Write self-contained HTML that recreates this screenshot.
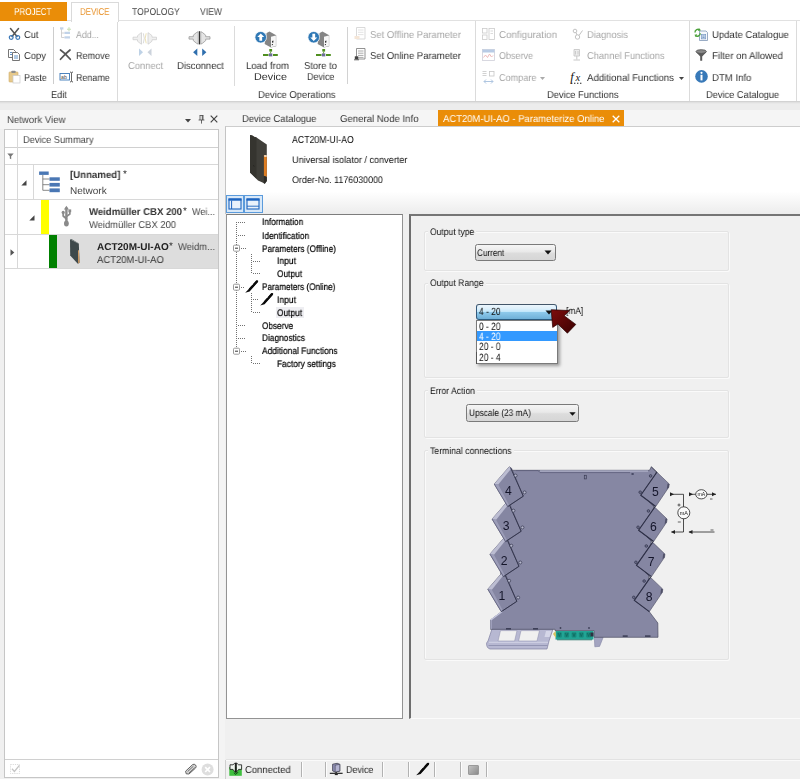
<!DOCTYPE html>
<html>
<head>
<meta charset="utf-8">
<style>
html,body{margin:0;padding:0;}
body{width:800px;height:779px;position:relative;overflow:hidden;background:#f0f0f0;font-family:"Liberation Sans",sans-serif;font-size:10.5px;color:#333;}
.a{position:absolute;box-sizing:border-box;}
.t{position:absolute;white-space:nowrap;transform-origin:0 50%;text-rendering:geometricPrecision;will-change:transform;}
.sep{position:absolute;width:1px;background:#dbdbdb;}
svg{position:absolute;overflow:visible;}
.gb{position:absolute;box-sizing:border-box;border:1px solid #e3e3e3;box-shadow:inset 1px 1px 0 #fafafa,1px 1px 0 #fafafa;border-radius:2px;}
.ssep{position:absolute;top:762px;width:1px;height:15px;background:#b2b2b2;box-shadow:1px 0 0 #fdfdfd;}

</style>
</head>
<body>
<!-- RIBBON BG -->
<div class="a" style="left:0;top:0;width:800px;height:102px;background:#fff;border-bottom:1px solid #d2d2d2;"></div>
<div class="a" style="left:0;top:102px;width:800px;height:8px;background:#ececec;"></div>
<div class="a" style="left:0;top:102px;width:800px;height:2px;background:linear-gradient(#dcdcdc,#ececec);"></div>
<div class="a" style="left:0;top:110px;width:800px;height:19px;background:#f5f5f5;"></div>
<div class="a" style="left:219px;top:129px;width:6px;height:650px;background:#f4f4f4;"></div>
<div class="a" style="left:0;top:20px;width:800px;height:1px;background:#e1e1e1;"></div>
<div class="a" style="left:0;top:2px;width:67px;height:19px;background:#ea8d08;"></div>
<div class="a" style="left:71px;top:2px;width:48px;height:20px;border:1px solid #dadada;border-bottom:none;background:#fff;z-index:2;"></div>
<div class="sep" style="left:53px;top:27px;height:57px;background:#cdcdcd;"></div>
<div class="sep" style="left:117px;top:21px;height:80px;"></div>
<div class="sep" style="left:234px;top:26px;height:60px;"></div>
<div class="sep" style="left:347px;top:27px;height:57px;background:#d2d2d2;"></div>
<div class="sep" style="left:475px;top:21px;height:80px;"></div>
<div class="sep" style="left:689px;top:21px;height:80px;"></div>
<div class="sep" style="left:796px;top:21px;height:80px;"></div>

<!-- LEFT PANEL -->
<div class="a" style="left:4px;top:129px;width:215px;height:649px;background:#fff;border:1px solid #c6c6c6;"></div>
<div class="a" style="left:5px;top:147px;width:213px;height:1px;background:#d0d0d0;"></div>
<div class="a" style="left:17px;top:130px;width:1px;height:138px;background:#d8d8d8;"></div>
<div class="a" style="left:5px;top:164px;width:213px;height:1px;background:#d8d8d8;"></div>
<div class="a" style="left:5px;top:199px;width:213px;height:1px;background:#d8d8d8;"></div>
<div class="a" style="left:5px;top:234px;width:213px;height:1px;background:#d8d8d8;"></div>
<div class="a" style="left:5px;top:268px;width:213px;height:1px;background:#d8d8d8;"></div>
<div class="a" style="left:33px;top:165px;width:1px;height:34px;background:#d8d8d8;"></div>
<div class="a" style="left:41px;top:200px;width:8px;height:34px;background:#ffff00;"></div>
<div class="a" style="left:49px;top:235px;width:8px;height:33px;background:#008000;"></div>
<div class="a" style="left:57px;top:235px;width:161px;height:33px;background:#dddddd;"></div>
<div class="a" style="left:5px;top:759px;width:213px;height:1px;background:#d0d0d0;"></div>

<!-- DOC AREA -->
<div class="a" style="left:438px;top:110px;width:186px;height:17px;background:#ea8d08;"></div>
<div class="a" style="left:225px;top:126px;width:575px;height:88px;background:linear-gradient(#fff 0,#fff 74%,#ececec 100%);border-top:1px solid #cdcdcd;border-left:1px solid #c4c4c4;"></div>
<!-- tree panel -->
<div class="a" style="left:226px;top:214px;width:177px;height:505px;background:#fff;border:1px solid #939393;border-top-color:#7d7d7d;"></div>
<!-- right panel -->
<div class="a" style="left:409px;top:214px;width:395px;height:505px;background:#f0f0f0;border:2px solid #6e6e6e;border-right:none;border-top:2px solid #757575;border-bottom:1px solid #fbfbfb"></div>
<!-- group boxes -->
<div class="gb" style="left:424px;top:231px;width:305px;height:40px;"></div>
<div class="gb" style="left:424px;top:283px;width:305px;height:95px;"></div>
<div class="gb" style="left:424px;top:390px;width:305px;height:48px;"></div>
<div class="gb" style="left:424px;top:450px;width:305px;height:210px;"></div>
<div class="a" style="left:428px;top:226px;width:48px;height:10px;background:#f0f0f0;"></div>
<div class="a" style="left:428px;top:278px;width:58px;height:10px;background:#f0f0f0;"></div>
<div class="a" style="left:428px;top:385px;width:49px;height:10px;background:#f0f0f0;"></div>
<div class="a" style="left:428px;top:445px;width:86px;height:10px;background:#f0f0f0;"></div>

<!-- combos -->
<div class="a" style="left:475px;top:244px;width:81px;height:17px;border:1px solid #7a7a7a;border-radius:2.5px;background:linear-gradient(#f5f5f5,#e9e9e9 45%,#dcdcdc 55%,#d6d6d6);z-index:2;"></div>
<svg style="left:544px;top:250px;z-index:3" width="8" height="5" viewBox="0 0 8 5"><path d="M0.5 0.5h7L4 4.5z" fill="#111"/></svg>
<div class="a" style="left:476px;top:303.5px;width:81px;height:16.5px;border:1px solid #35597a;border-top-color:#435669;border-bottom-color:#2b5c80;border-radius:3px;background:linear-gradient(#ecf6fd 0%,#dbeffb 28%,#bfe6fb 49%,#8dc9eb 53%,#6fb0d8 100%);z-index:5;"></div>
<svg style="left:545px;top:309.5px;z-index:6" width="8" height="5" viewBox="0 0 8 5"><path d="M0.5 0.5h7L4 4.5z" fill="#111"/></svg>
<div class="a" style="left:476px;top:320px;width:82px;height:43.5px;border:1px solid #7a7a7a;background:#fff;box-shadow:2px 2px 3px rgba(0,0,0,0.35);z-index:8;"></div>
<div class="a" style="left:477px;top:331px;width:80px;height:10px;background:#3399ff;z-index:8;"></div>
<div class="a" style="left:476px;top:352px;width:1px;height:12px;background:#555;z-index:9;"></div>
<div class="a" style="left:466px;top:404px;width:113px;height:17.5px;border:1px solid #7a7a7a;border-radius:2.5px;background:linear-gradient(#f5f5f5,#e9e9e9 45%,#dcdcdc 55%,#d6d6d6);z-index:2;"></div>
<svg style="left:568.5px;top:411.5px;z-index:3" width="7" height="4" viewBox="0 0 7 4"><path d="M0.3 0.3h6.4L3.5 3.8z" fill="#111"/></svg>
<!-- red arrow -->
<svg style="left:545px;top:305px;z-index:12" width="36" height="32" viewBox="545 305 36 32">
<defs><linearGradient id="rg" x1="0" y1="0" x2="1" y2="1"><stop offset="0" stop-color="#7e0d0d"/><stop offset="1" stop-color="#3a0000"/></linearGradient></defs>
<path d="M551.2 309.7 L569.6 310.6 L564.2 315.8 L575.8 324.4 L567.4 333.2 L557.9 324 L552.7 327.4 Z" fill="url(#rg)" stroke="#260000" stroke-width="0.7" stroke-linejoin="round"/>
</svg>

<!-- STATUS BAR -->
<div class="a" style="left:226px;top:759px;width:574px;height:1px;background:#e2e2e2;"></div>
<div class="a" style="left:226px;top:760px;width:574px;height:1px;background:#fafafa;"></div>
<div class="ssep" style="left:301px;"></div>
<div class="ssep" style="left:325px;"></div>
<div class="ssep" style="left:382px;"></div>
<div class="ssep" style="left:408px;"></div>
<div class="ssep" style="left:433.5px;"></div>
<div class="ssep" style="left:459.5px;"></div>
<div class="ssep" style="left:485.5px;"></div>

<!-- ===== RIBBON ICONS ===== -->
<!-- scissors -->
<svg style="left:8px;top:27px" width="13" height="14" viewBox="8 27 13 14">
<path d="M10.5 28.5 L17 36.5 M18.5 28.5 L12 36.5" stroke="#555" stroke-width="1.5" fill="none" stroke-linecap="round"/>
<circle cx="11.2" cy="37.5" r="1.9" fill="none" stroke="#3b78b8" stroke-width="1.2"/>
<circle cx="17.8" cy="37.5" r="1.9" fill="none" stroke="#3b78b8" stroke-width="1.2"/>
</svg>
<!-- copy -->
<svg style="left:7px;top:48px" width="14" height="14" viewBox="7 48 14 14">
<path d="M8.5 49.5 h5 l2 2 v6 h-7 z" fill="#fff" stroke="#666" stroke-width="0.9"/>
<path d="M12.5 52.5 h5 l2 2 v6 h-7 z" fill="#fff" stroke="#666" stroke-width="0.9"/>
<path d="M10 52.5 h2 M10 54.5 h2 M14 56 h4 M14 58 h4" stroke="#3b78b8" stroke-width="0.8"/>
</svg>
<!-- paste -->
<svg style="left:8px;top:69px" width="14" height="15" viewBox="8 69 14 15">
<rect x="9" y="72" width="9" height="10" rx="0.8" fill="#e6c98c" stroke="#d1ad66" stroke-width="0.6"/>
<rect x="11.5" y="70.7" width="4" height="2.4" rx="0.6" fill="#8f8f8f"/>
<rect x="13" y="75.5" width="7" height="7.5" fill="#fff" stroke="#c9c9c9" stroke-width="0.7"/>
</svg>
<!-- add (faded) -->
<svg style="left:59px;top:26px" width="14" height="14" viewBox="59 26 14 14" opacity="0.55">
<path d="M61.5 29 v8.5 h3 M61.5 33 h3" stroke="#999" stroke-width="0.8" fill="none"/>
<rect x="60" y="27.3" width="3.4" height="2.2" fill="#8fb0d8"/>
<rect x="64.5" y="31.8" width="5.5" height="2.2" fill="#8fb0d8"/>
<rect x="64.5" y="36.3" width="5.5" height="2.2" fill="#8fb0d8"/>
<path d="M69 27.2 v4 M67 29.2 h4" stroke="#9ac77a" stroke-width="1.1"/>
</svg>
<!-- remove X -->
<svg style="left:59px;top:48px" width="13" height="13" viewBox="59 48 13 13">
<path d="M60.5 50 Q65 53 70.3 59.3 M70 50 Q65.5 53.5 60.5 59.3" stroke="#555" stroke-width="1.7" fill="none" stroke-linecap="round"/>
</svg>
<!-- rename -->
<svg style="left:59px;top:70px" width="16" height="13" viewBox="59 70 16 13">
<rect x="60" y="73.5" width="9.5" height="6.5" fill="#fff" stroke="#3b78b8" stroke-width="0.9"/>
<text x="61" y="79" font-size="5.2" font-family="Liberation Sans, sans-serif" fill="#444">ab</text>
<path d="M70 72 q1.3 0 1.5 1 v8 q-0.2 1 -1.5 1 M73 72 q-1.3 0 -1.5 1 M73 82 q-1.3 0 -1.5 -1" stroke="#555" stroke-width="0.9" fill="none"/>
</svg>
<!-- connect (faded) -->
<svg style="left:130px;top:30px" width="30" height="30" viewBox="130 30 30 30" opacity="0.5">
<path d="M133 37.2 h4.5 v-1.5 q3.5 -3 4 -3 v11.5 q-0.5 0 -4 -3 v-1.5 h-4.5 z" fill="#e2e2e2" stroke="#9a9a9a" stroke-width="0.7"/>
<path d="M156.5 37.2 h-4.5 v-1.5 q-3.5 -3 -4 -3 v11.5 q0.5 0 4 -3 v-1.5 h4.5 z" fill="#e2e2e2" stroke="#9a9a9a" stroke-width="0.7"/>
<path d="M143.3 33.3 q2 5 0 10" stroke="#9a9a9a" stroke-width="0.7" fill="none"/>
<path d="M146.2 33.3 q-2 5 0 10" stroke="#d8c060" stroke-width="0.9" fill="none"/>
<path d="M139 48.5 l4 3.7 l-4 3.7 z" fill="#7fa6cf"/>
<path d="M151.5 48.5 l-4 3.7 l4 3.7 z" fill="#9aa8ba"/>
</svg>
<!-- disconnect -->
<svg style="left:186px;top:29px" width="28" height="30" viewBox="186 29 28 30">
<path d="M189 36.7 h4.3 v-1.5 q4 -3.6 5 -3.6 v12.6 q-1 0 -5 -3.6 v-1.5 h-4.3 z" fill="#e4e4e4" stroke="#8c8c8c" stroke-width="0.7"/>
<path d="M210 36.7 h-4.3 v-1.5 q-4 -3.6 -5 -3.6 v12.6 q1 0 5 -3.6 v-1.5 h4.3 z" fill="#e4e4e4" stroke="#8c8c8c" stroke-width="0.7"/>
<path d="M199.5 31.2 v13.2" stroke="#333" stroke-width="1"/>
<path d="M197.3 48.5 l-4.2 3.7 l4.2 3.7 z" fill="#2f6fae"/>
<path d="M202.2 48.5 l4.2 3.7 l-4.2 3.7 z" fill="#2f6fae"/>
</svg>
<!-- load from device -->
<svg style="left:253px;top:28px" width="28" height="30" viewBox="253 28 28 30">
<path d="M264.6 44 L266.6 33 L269.5 31.4 L276.2 35.2 L276.2 46.2 L271 47.6 Z" fill="#858585"/>
<path d="M271 36.8 L275.9 35.6 L275.9 45.9 L271 47.2 Z" fill="#f6f6f6"/>
<path d="M272 41 l1.4 -0.4 v1.8 l-1.4 0.4z M271.8 44.2 l1.2 -0.3 v1 l-1.2 0.3z" fill="#333"/>
<circle cx="260.75" cy="37.25" r="5.8" fill="#2f78b5" stroke="#fff" stroke-width="0.7"/>
<path d="M260.75 33.4 l3.5 3.7 h-2.1 v3.6 h-2.8 v-3.6 h-2.1 z" fill="#fff"/>
<rect x="269.3" y="49" width="2.8" height="2.6" fill="#4f8f1f"/>
<rect x="263" y="54" width="5.5" height="2" fill="#4f8f1f"/>
<rect x="273" y="54" width="4.8" height="2" fill="#4f8f1f"/>
<rect x="268.9" y="53.4" width="3.4" height="3" fill="#6b6b98"/>
<path d="M270.6 51.6 v2" stroke="#6f9f4f" stroke-width="1"/>
</svg>
<!-- store to device -->
<svg style="left:306px;top:28px" width="28" height="30" viewBox="306 28 28 30">
<path d="M317.6 44 L319.6 33 L322.5 31.4 L329.2 35.2 L329.2 46.2 L324 47.6 Z" fill="#858585"/>
<path d="M324 36.8 L328.9 35.6 L328.9 45.9 L324 47.2 Z" fill="#f6f6f6"/>
<path d="M325 41 l1.4 -0.4 v1.8 l-1.4 0.4z M324.8 44.2 l1.2 -0.3 v1 l-1.2 0.3z" fill="#333"/>
<circle cx="313.75" cy="37.25" r="5.8" fill="#2f78b5" stroke="#fff" stroke-width="0.7"/>
<path d="M313.75 41.1 l3.5 -3.7 h-2.1 v-3.6 h-2.8 v3.6 h-2.1 z" fill="#fff"/>
<rect x="322.3" y="49" width="2.8" height="2.6" fill="#4f8f1f"/>
<rect x="316" y="54" width="5.5" height="2" fill="#4f8f1f"/>
<rect x="326" y="54" width="4.8" height="2" fill="#4f8f1f"/>
<rect x="321.9" y="53.4" width="3.4" height="3" fill="#6b6b98"/>
<path d="M323.6 51.6 v2" stroke="#6f9f4f" stroke-width="1"/>
</svg>
<!-- set offline (faded) -->
<svg style="left:353px;top:26px" width="14" height="15" viewBox="353 26 14 15" opacity="0.45">
<path d="M356.5 27.5 h8.5 v11.5 h-8.5 z" fill="#fff" stroke="#999" stroke-width="0.8"/>
<path d="M358 30 h5.5 M358 32.3 h5.5 M358 34.6 h5.5" stroke="#aaa" stroke-width="0.7"/>
<path d="M354.5 36 h5 v3 h-5 z" fill="#e9c9a8"/>
</svg>
<!-- set online -->
<svg style="left:353px;top:47px" width="14" height="15" viewBox="353 47 14 15">
<path d="M356.5 48.5 h8.5 v10.5 h-8.5 z" fill="#fff" stroke="#777" stroke-width="0.8"/>
<path d="M358 51 h5.5 M358 53.2 h5.5 M358 55.4 h5.5 M358 57.4 h5.5" stroke="#888" stroke-width="0.7"/>
<path d="M354.8 56.3 h3.4 v3 h-3.4 z" fill="#444"/>
<path d="M354 59.8 h5" stroke="#444" stroke-width="0.8"/>
</svg>
<!-- configuration (faded) -->
<svg style="left:481px;top:27px" width="15" height="14" viewBox="481 27 15 14" opacity="0.5">
<rect x="482.5" y="28.5" width="4.5" height="4.5" fill="#fff" stroke="#999" stroke-width="0.8"/>
<rect x="482.5" y="35" width="4.5" height="4.5" fill="#fff" stroke="#999" stroke-width="0.8"/>
<rect x="489" y="28.5" width="5.5" height="11" fill="#fff" stroke="#999" stroke-width="0.8"/>
<path d="M490.5 31 h2.5 M490.5 33.5 h2.5" stroke="#999" stroke-width="0.7"/>
</svg>
<!-- observe (faded) -->
<svg style="left:481px;top:48px" width="15" height="14" viewBox="481 48 15 14" opacity="0.55">
<rect x="482.5" y="49.5" width="12" height="11" fill="#fff" stroke="#aab" stroke-width="0.8"/>
<rect x="482.5" y="49.5" width="12" height="3" fill="#7fa2d0"/>
<path d="M483.5 57.5 l2 -2.5 l2 2.5 l2 -3.5 l2 3 l1.5 -1.5" stroke="#d77" stroke-width="0.9" fill="none"/>
</svg>
<!-- compare (faded) -->
<svg style="left:481px;top:70px" width="15" height="15" viewBox="481 70 15 15" opacity="0.55">
<path d="M482.5 71.5 h4 M482.5 73.5 h4 M482.5 75.5 h4" stroke="#999" stroke-width="0.8"/>
<rect x="489.5" y="71.5" width="4.5" height="4.5" fill="#fff" stroke="#999" stroke-width="0.8"/>
<path d="M484 81.5 h9 M484 81.5 l2 -2 M484 81.5 l2 2 M493 81.5 l-2 -2 M493 81.5 l-2 2" stroke="#6f98c9" stroke-width="1" fill="none"/>
</svg>
<svg style="left:540px;top:77px" width="5" height="3" viewBox="0 0 5 3"><path d="M0 0h5L2.5 3z" fill="#aaa"/></svg>
<!-- diagnosis (faded) -->
<svg style="left:571px;top:27px" width="14" height="14" viewBox="571 27 14 14" opacity="0.5">
<circle cx="575" cy="31" r="1.8" fill="none" stroke="#888" stroke-width="1"/>
<circle cx="577.5" cy="37" r="2.2" fill="none" stroke="#888" stroke-width="1"/>
<path d="M576 32.5 l1 2.5 M579 35.5 l3.5 -5" stroke="#888" stroke-width="1" fill="none"/>
</svg>
<!-- channel functions (faded) -->
<svg style="left:571px;top:48px" width="12" height="14" viewBox="571 48 12 14" opacity="0.5">
<path d="M574 49.5 h5.5 v6.5 h-5.5 z M575.5 51 v3.5 M578 51 v3.5" fill="#ddd" stroke="#888" stroke-width="0.8"/>
<path d="M576.8 56 v3.5 M573.5 60 h6.5" stroke="#888" stroke-width="0.9"/>
</svg>
<!-- fx -->
<svg style="left:569px;top:70px" width="16" height="15" viewBox="569 70 16 15">
<text x="570.3" y="81" font-size="12.5" font-style="italic" font-family="Liberation Serif, serif" fill="#111">f</text>
<text x="575.5" y="81" font-size="10.5" font-style="italic" font-family="Liberation Serif, serif" fill="#111">x</text>
<path d="M571 83.3 h1.4 M574 83.3 h1.4 M577 83.3 h1.4 M580 83.3 h1.4" stroke="#222" stroke-width="1.1"/>
</svg>
<svg style="left:678.5px;top:77px" width="5" height="3" viewBox="0 0 5 3"><path d="M0 0h5L2.5 3z" fill="#444"/></svg>
<!-- update catalogue -->
<svg style="left:693px;top:27px" width="16" height="15" viewBox="693 27 16 15">
<path d="M699.5 31 h6.5 l1.5 1.5 v8 h-8 z" fill="#f5f8fc" stroke="#7f97b5" stroke-width="0.8"/>
<rect x="701.3" y="34.5" width="4.4" height="4.4" fill="#cfdcec" stroke="#6d8fc0" stroke-width="0.6"/>
<path d="M702.5 36 h2 M702.5 37.5 h2" stroke="#4a78b5" stroke-width="0.6"/>
<path d="M695 32.5 a3 3 0 0 1 5 -2.5 M700.2 33.2 a3 3 0 0 1 -5 2.3" stroke="#4da23c" stroke-width="1.4" fill="none"/>
<path d="M699.2 28.2 l1.6 2.3 l-2.8 0.4 z M696 37 l-1.6 -2.3 l2.8 -0.4 z" fill="#4da23c"/>
</svg>
<!-- filter funnel -->
<svg style="left:694px;top:48px" width="14" height="14" viewBox="694 48 14 14">
<ellipse cx="701.2" cy="51.6" rx="5.2" ry="1.9" fill="#8a8a8a" stroke="#555" stroke-width="0.9"/>
<path d="M696.2 52.2 l4 4.2 v4.4 h2 v-4.4 l4 -4.2 q-5 2.2 -10 0 z" fill="#5a5a5a"/>
</svg>
<!-- info -->
<svg style="left:694px;top:69px" width="15" height="15" viewBox="694 69 15 15">
<circle cx="701.5" cy="76.4" r="6.3" fill="#3879b8"/>
<circle cx="701.5" cy="72.8" r="1.1" fill="#fff"/>
<rect x="700.5" y="74.8" width="2" height="5.6" fill="#fff"/>
</svg>

<!-- ===== PANEL HEADER ICONS ===== -->
<svg style="left:185px;top:118.5px" width="6" height="3.5" viewBox="0 0 6 3.5"><path d="M0 0h6L3 3.5z" fill="#444"/></svg>
<svg style="left:197.5px;top:114.5px" width="7" height="9" viewBox="0 0 7 9"><path d="M1.6 0.5 h3.8 M2 0.5 v4.5 M5 0.5 v4.5 M4.3 0.5 v4.5 M0.6 5 h5.8 M3.5 5 v3.6" stroke="#444" stroke-width="0.8" fill="none"/></svg>
<svg style="left:209.5px;top:114.5px" width="8" height="8" viewBox="0 0 8 8"><path d="M0.7 0.7 L7.3 7.3 M7.3 0.7 L0.7 7.3" stroke="#444" stroke-width="1.2"/></svg>
<svg style="left:611.5px;top:114.5px;z-index:6" width="8" height="8" viewBox="0 0 8 8"><path d="M0.7 0.7 L7.3 7.3 M7.3 0.7 L0.7 7.3" stroke="#fff" stroke-width="1.3"/></svg>

<!-- ===== LEFT GRID ICONS ===== -->
<svg style="left:7px;top:153px" width="7" height="7" viewBox="0 0 7 7"><path d="M0.3 0.5 h6.4 l-2.5 2.8 v3 l-1.4 -0.9 v-2.1 z" fill="#777"/></svg>
<svg style="left:21px;top:180px" width="6" height="6" viewBox="0 0 6 6"><path d="M5.5 0.3 V5.5 H0.3 z" fill="#444"/></svg>
<svg style="left:28.5px;top:214.5px" width="6" height="6" viewBox="0 0 6 6"><path d="M5.5 0.3 V5.5 H0.3 z" fill="#444"/></svg>
<svg style="left:9.5px;top:249px" width="5" height="7" viewBox="0 0 5 7"><path d="M0.5 0.3 L4.3 3.5 L0.5 6.7 z" fill="#555"/></svg>
<!-- network icon -->
<svg style="left:38px;top:170px" width="24" height="24" viewBox="38 170 24 24">
<path d="M42.8 174.8 V190.3 H49.5 M42.8 179 H49.5 M42.8 184.7 H49.5" stroke="#6a6a6a" stroke-width="0.8" fill="none"/>
<rect x="39.1" y="171.5" width="9.6" height="3.4" fill="#4a77b4"/>
<rect x="49.5" y="177.3" width="10.3" height="3.5" fill="#4a77b4"/>
<rect x="49.5" y="182.9" width="10.3" height="3.7" fill="#4a77b4"/>
<rect x="49.5" y="188.4" width="10.3" height="3.8" fill="#4a77b4"/>
</svg>
<!-- usb icon -->
<svg style="left:59px;top:204px" width="14" height="24" viewBox="59 204 14 24">
<g fill="none" stroke="#8a8a8a" stroke-linecap="round" stroke-linejoin="round">
<path d="M66.4 208.5 V221" stroke-width="2.4"/>
<path d="M66.4 218.8 L63.2 216 V213" stroke-width="1.8"/>
<path d="M66.4 216.6 L69.8 214 V211.6" stroke-width="1.8"/>
</g>
<path d="M66.4 205.8 L68.9 209.6 H63.9 Z" fill="#8a8a8a"/>
<circle cx="63.2" cy="212.4" r="1.6" fill="#8a8a8a"/>
<rect x="68.4" y="209.4" width="2.8" height="2.8" fill="#8a8a8a"/>
<ellipse cx="66.4" cy="223.4" rx="2.4" ry="3" fill="#8a8a8a"/>
</svg>
<!-- small device icon -->
<svg style="left:68px;top:238px" width="14" height="27" viewBox="67 238 14 27">
<path d="M69 239.2 L77.8 243.8 L78.6 262.8 L76.8 263.8 L69.2 255.5 Z" fill="#3e494b"/>
<path d="M77.9 250 L78.6 262.8 L77.2 263.5 L77 250.5 Z" fill="#d9a066"/>
<path d="M69 239.2 L70.5 239 L78 243.4 L77.8 243.8 Z" fill="#5e6a6a"/>
</svg>

<!-- ===== DEVICE HEADER IMAGE ===== -->
<svg style="left:246px;top:132px" width="24" height="54" viewBox="246 132 24 54">
<path d="M250 135 L252.2 135.2 L254.5 137 L256.5 137.6 L266.8 144.6 L266.8 181 L264.8 183.8 L262.5 182.6 L258 180.6 L250 172.4 Z" fill="#403f3a"/>
<path d="M250 135 L256.5 137.6 L256.5 178.8 L250 172.4 Z" fill="#35342f"/>
<path d="M263.9 155 L266.8 155.6 L266.8 176.8 L263.9 175.8 Z" fill="#dd7d22"/>
<rect x="264.2" y="155.2" width="2.5" height="1.6" fill="#f4eadc"/>
<path d="M263.9 176 L266.8 177 L266.8 181 L264.8 183.8 L263.9 183.2 Z" fill="#2c2b27"/>
<path d="M253 165.5 l1.5 0.8" stroke="#22211e" stroke-width="0.8"/>
</svg>

<!-- ===== TOOLBAR BUTTONS ===== -->
<div class="a" style="left:226px;top:195px;width:18px;height:18px;border:1px solid #5b9bdc;background:#d8e8f8;"></div>
<div class="a" style="left:244px;top:195px;width:19px;height:18px;border:1px solid #5b9bdc;background:#d8e8f8;"></div>
<svg style="left:228px;top:198px" width="14" height="12" viewBox="0 0 14 12">
<rect x="1" y="1" width="12" height="10" fill="#eaf2fb" stroke="#1c64c0" stroke-width="1.1"/>
<rect x="0.5" y="0.5" width="13" height="2.2" fill="#1c64c0"/>
<path d="M3.6 2.5 V11" stroke="#1c64c0" stroke-width="1"/>
</svg>
<svg style="left:246px;top:198px" width="14" height="12" viewBox="0 0 14 12">
<rect x="1" y="1" width="12" height="10" fill="#eaf2fb" stroke="#1c64c0" stroke-width="1.1"/>
<rect x="0.5" y="0.5" width="13" height="2.2" fill="#1c64c0"/>
<path d="M1 8.2 H13" stroke="#1c64c0" stroke-width="0.9"/>
</svg>

<!-- ===== TREE DECOR ===== -->
<div class="a" style="left:275.5px;top:306.5px;width:28px;height:11px;background:#eeeef2;z-index:2;"></div>
<svg style="left:226px;top:214px;z-index:2" width="80" height="160" viewBox="226 214 80 160">
<g stroke="#707070" stroke-width="1" stroke-dasharray="1 1" fill="none">
<path d="M236.5 222 V351"/>
<path d="M238 222.5 H246"/><path d="M238 235.5 H246"/><path d="M241 248.5 H246"/><path d="M241 287.5 H245"/>
<path d="M238 325.5 H246"/><path d="M238 338.5 H246"/><path d="M241 351.5 H246"/>
<path d="M251.5 254 V274"/><path d="M253 261.5 H261"/><path d="M253 273.5 H261"/>
<path d="M251.5 293 V313"/><path d="M253 299.5 H258"/><path d="M253 312.5 H261"/>
<path d="M251.5 356 V364"/><path d="M253 363.5 H261"/>
</g>
<g fill="#fff" stroke="#8f8f8f" stroke-width="0.9">
<rect x="233.5" y="245.2" width="6" height="6" rx="1"/>
<rect x="233.5" y="284.2" width="6" height="6" rx="1"/>
<rect x="233.5" y="348.2" width="6" height="6" rx="1"/>
</g>
<path d="M235 248.2 h3 M235 287.2 h3 M235 351.2 h3" stroke="#333" stroke-width="1"/>
<!-- pencils -->
<g id="pen1">
<path d="M245.2 292.8 L247.6 290.2 L256.4 280.6 L257.6 280.2 L258.3 281.1 L257.8 282.2 L249.6 291.6 Z" fill="#0a0a0a"/>
<path d="M249.6 289.4 L257.2 281" stroke="#0a0a0a" stroke-width="2.1"/><path d="M251.8 285.2 l0.9 -1" stroke="#fff" stroke-width="0.7"/>
</g>
<g transform="translate(15,12.7)">
<path d="M245.2 292.8 L247.6 290.2 L256.4 280.6 L257.6 280.2 L258.3 281.1 L257.8 282.2 L249.6 291.6 Z" fill="#0a0a0a"/>
<path d="M249.6 289.4 L257.2 281" stroke="#0a0a0a" stroke-width="2.1"/><path d="M251.8 285.2 l0.9 -1" stroke="#fff" stroke-width="0.7"/>
</g>
</svg>

<!-- ===== STATUS ICONS ===== -->
<svg style="left:229px;top:762px" width="14" height="15" viewBox="229 762 14 15">
<rect x="229.3" y="767" width="12.5" height="8.8" fill="#3fbf3f"/>
<path d="M230 764.8 h3 q1.5 -1.6 2.3 -1.8 v9 q-0.8 -0.2 -2.3 -2.6 h-3 z" fill="#eef3ee" stroke="#111" stroke-width="0.8"/>
<path d="M241.6 764.8 h-3 q-1.5 -1.6 -2.3 -1.8 v9 q0.8 -0.2 2.3 -2.6 h3 z" fill="#eef3ee" stroke="#111" stroke-width="0.8"/>
<path d="M235.8 762.8 v10" stroke="#111" stroke-width="1.1"/>
<path d="M233.8 772.6 l2 1.8 l2.2 -2.2" stroke="#0d3d0d" stroke-width="1" fill="none"/>
</svg>
<svg style="left:329px;top:762px" width="15" height="15" viewBox="329 762 15 15">
<path d="M332.6 764.2 l4.6 -0.9 l2.6 1 v6.8 l-4.6 1 l-2.6 -1.2 z" fill="#8f8fb4" stroke="#2f2f3c" stroke-width="0.7"/>
<path d="M335.2 765.2 l4.6 -0.9 v6.8 l-4.6 1 z" fill="#b4b4d2" stroke="#2f2f3c" stroke-width="0.5"/>
<path d="M329.8 773.3 h12.8" stroke="#111" stroke-width="1.1"/>
<path d="M336.2 772 v1 M334.8 774.6 h3" stroke="#111" stroke-width="1"/>
</svg>
<svg style="left:415px;top:762px" width="15" height="15" viewBox="415 762 15 15">
<path d="M416.2 775.3 L418.6 772.7 L427.4 763.1 L428.6 762.7 L429.3 763.6 L428.8 764.7 L420.6 774.1 Z" fill="#0a0a0a"/>
<path d="M420.6 771.9 L428.2 763.5" stroke="#0a0a0a" stroke-width="2.1"/><path d="M422.8 767.7 l0.9 -1" stroke="#fff" stroke-width="0.7"/>
</svg>
<div class="a" style="left:468px;top:764.5px;width:11px;height:10.5px;background:linear-gradient(135deg,#c2c2c2,#8c8c8c);border:1px solid #9a9a9a;border-radius:1px;"></div>
<div class="a" style="left:225px;top:760px;width:1px;height:19px;background:#cfcfcf;"></div>

<!-- ===== LEFT BOTTOM ICONS ===== -->
<svg style="left:10px;top:764px" width="11" height="11" viewBox="0 0 11 11">
<rect x="0.5" y="0.5" width="9" height="9" fill="none" stroke="#d2d2d2" stroke-width="0.8" stroke-dasharray="1.2 1"/>
<path d="M2 4.8 l2.4 2.6 l5 -6" stroke="#c4c4c4" stroke-width="1.3" fill="none"/>
</svg>
<svg style="left:184px;top:763px" width="14" height="13" viewBox="0 0 14 13">
<path d="M2.2 10.8 L1.6 8.2 L8.6 1.6 Q10.2 0.6 11.6 2 Q12.8 3.6 11.6 5 L5 11 Z" fill="#d8d8d8" stroke="#555" stroke-width="0.9"/>
<path d="M3.6 8.6 L9.4 3.2 M5 10 L10.8 4.6" stroke="#555" stroke-width="0.8"/>
</svg>
<svg style="left:201px;top:763px" width="14" height="14" viewBox="0 0 14 14">
<circle cx="6.6" cy="6.6" r="6" fill="#dedede"/>
<path d="M4.2 4.2 L9 9 M9 4.2 L4.2 9" stroke="#fff" stroke-width="1.7"/>
</svg>

<svg style="left:470px;top:460px;z-index:3;will-change:transform" width="260" height="200" viewBox="470 460 260 200">
<path d="M492 629 L553 629 L549 641 L547 649 L490 649 Q486.3 648 486.6 643 L488 641 Z" fill="#b7b8d2" stroke="#7f80a2" stroke-width="0.7"/>
<path d="M500.5 630.6 L517 630.6 L514.6 641 L498 641 Z" fill="#f0f0f0" stroke="#8a8bab" stroke-width="0.5"/>
<path d="M521 630.6 L539.5 630.6 L537 641 L518.6 641 Z" fill="#f0f0f0" stroke="#8a8bab" stroke-width="0.5"/>
<path d="M546 631 L551.5 631 L549.5 637 L544.5 637 Z" fill="#d5d6e8"/>
<path d="M488.5 645.5 L547.5 645.5" stroke="#8485a6" stroke-width="0.7"/>
<path d="M489 642.3 L548 642.3" stroke="#d3d4e6" stroke-width="1"/>
<path d="M594.3 637.3 L603.2 637.3 L599.6 646.4 L594.8 646.8 Z" fill="#a3a4c0" stroke="#77789a" stroke-width="0.5"/>
<polygon points="511.50,470.30 649.50,470.30 651.25,466.90 656.00,472.00 647.00,600.00 649.30,611.70 657.80,623.00 658.00,637.30 594.00,637.30 594.00,630.50 555.00,630.50 555.00,629.30 490.50,629.30 490.50,620.00 502.50,611.00 498.00,600.00" fill="#8687a3" stroke="#4b4c62" stroke-width="0.7" stroke-linejoin="round"/>
<path d="M516 470.6 L538 470.6 L540 472.6 L630 472.6" stroke="#5d5f7c" stroke-width="0.8" fill="none"/>
<path d="M540 471 L648 471" stroke="#bfc1d8" stroke-width="1" fill="none"/>
<rect x="584.3" y="475.3" width="2" height="3.6" fill="none" stroke="#3b3d55" stroke-width="0.7"/>
<rect x="631.5" y="473" width="2.2" height="2" fill="#4b4d68"/>
<path d="M490.8 620 L502.5 611.2" stroke="#c5c7de" stroke-width="1.4"/>
<path d="M491 620 L491 629" stroke="#b5b7d3" stroke-width="1"/>
<rect x="506" y="628" width="5" height="1.6" fill="#3e4058"/>
<rect x="533" y="628" width="5" height="1.6" fill="#3e4058"/>
<rect x="622.7" y="635.3" width="5" height="1.6" fill="#3e4058"/>
<rect x="645" y="635.3" width="5.5" height="1.6" fill="#3e4058"/>
<circle cx="560.5" cy="628" r="0.9" fill="#3e4058"/><circle cx="589" cy="628" r="0.9" fill="#3e4058"/>
<rect x="555.5" y="631" width="38" height="8.6" fill="#22a494"/>
<path d="M555.5 631 L553 634 L556 638 Z" fill="#d8c25a"/>
<rect x="557.0" y="632.2" width="4.8" height="5.4" rx="1" fill="#178a7d"/>
<path d="M558.2 633 L559.4 636.5 L560.6 633" stroke="#0f655c" stroke-width="0.7" fill="none"/>
<rect x="564.3" y="632.2" width="4.8" height="5.4" rx="1" fill="#178a7d"/>
<path d="M565.5 633 L566.7 636.5 L567.9 633" stroke="#0f655c" stroke-width="0.7" fill="none"/>
<rect x="571.6" y="632.2" width="4.8" height="5.4" rx="1" fill="#178a7d"/>
<path d="M572.8 633 L574.0 636.5 L575.2 633" stroke="#0f655c" stroke-width="0.7" fill="none"/>
<rect x="578.9" y="632.2" width="4.8" height="5.4" rx="1" fill="#178a7d"/>
<path d="M580.1 633 L581.3 636.5 L582.5 633" stroke="#0f655c" stroke-width="0.7" fill="none"/>
<rect x="586.2" y="632.2" width="4.8" height="5.4" rx="1" fill="#178a7d"/>
<path d="M587.4 633 L588.6 636.5 L589.8 633" stroke="#0f655c" stroke-width="0.7" fill="none"/>
<rect x="590.5" y="632.5" width="3" height="4" fill="#2e3040"/>
<path d="M557 639.8 L592 639.8" stroke="#1a6e62" stroke-width="0.8"/>
<polygon points="487.80,589.15 502.80,571.90 505.05,573.35 516.85,601.35 501.30,611.65" fill="#8586a2" stroke="#4b4c62" stroke-width="0.6" stroke-linejoin="round"/>
<polygon points="487.80,589.15 502.80,571.90 505.05,573.35 491.85,589.75" fill="#bcbdd2"/>
<polygon points="487.80,589.15 491.85,589.75 502.85,610.55 501.30,611.65" fill="#9c9db8"/>
<polyline points="504.05,572.75 516.85,601.35 501.30,611.65" fill="none" stroke="#34364e" stroke-width="1" stroke-linejoin="round"/>
<polyline points="487.80,589.15 501.30,611.65" fill="none" stroke="#5a5c7a" stroke-width="0.7"/>
<circle cx="509.15" cy="580.75" r="1.5" fill="#b6b7cc" stroke="#34364e" stroke-width="0.7"/>
<circle cx="518.15" cy="597.55" r="1.5" fill="#b6b7cc" stroke="#34364e" stroke-width="0.7"/>
<text x="501.95" y="600.25" font-size="12.2" text-anchor="middle" fill="#14152a" font-family="Liberation Sans, sans-serif">1</text>
<polygon points="644.80,571.90 662.80,589.15 662.35,592.35 649.30,611.65 634.30,600.40 650.55,577.15" fill="#8586a2" stroke="#4b4c62" stroke-width="0.6" stroke-linejoin="round"/>
<polygon points="661.15,588.55 662.80,589.15 662.35,592.35 660.35,594.65 660.75,591.15" fill="#505168"/>
<polyline points="650.55,577.15 634.30,600.40 649.30,611.65" fill="none" stroke="#2e3047" stroke-width="1.1" stroke-linejoin="round"/>
<circle cx="644.15" cy="581.05" r="1.3" fill="#6e6f8c" stroke="#2e3047" stroke-width="0.7"/>
<circle cx="633.75" cy="597.35" r="1.3" fill="#6e6f8c" stroke="#2e3047" stroke-width="0.7"/>
<text x="649.05" y="600.65" font-size="12.2" text-anchor="middle" fill="#14152a" font-family="Liberation Sans, sans-serif">8</text>
<polygon points="489.95,554.10 504.95,536.85 507.20,538.30 519.00,566.30 503.45,576.60" fill="#8586a2" stroke="#4b4c62" stroke-width="0.6" stroke-linejoin="round"/>
<polygon points="489.95,554.10 504.95,536.85 507.20,538.30 494.00,554.70" fill="#bcbdd2"/>
<polygon points="489.95,554.10 494.00,554.70 505.00,575.50 503.45,576.60" fill="#9c9db8"/>
<polyline points="506.20,537.70 519.00,566.30 503.45,576.60" fill="none" stroke="#34364e" stroke-width="1" stroke-linejoin="round"/>
<polyline points="489.95,554.10 503.45,576.60" fill="none" stroke="#5a5c7a" stroke-width="0.7"/>
<circle cx="511.30" cy="545.70" r="1.5" fill="#b6b7cc" stroke="#34364e" stroke-width="0.7"/>
<circle cx="520.30" cy="562.50" r="1.5" fill="#b6b7cc" stroke="#34364e" stroke-width="0.7"/>
<text x="504.10" y="565.20" font-size="12.2" text-anchor="middle" fill="#14152a" font-family="Liberation Sans, sans-serif">2</text>
<polygon points="646.95,536.85 664.95,554.10 664.50,557.30 651.45,576.60 636.45,565.35 652.70,542.10" fill="#8586a2" stroke="#4b4c62" stroke-width="0.6" stroke-linejoin="round"/>
<polygon points="663.30,553.50 664.95,554.10 664.50,557.30 662.50,559.60 662.90,556.10" fill="#505168"/>
<polyline points="652.70,542.10 636.45,565.35 651.45,576.60" fill="none" stroke="#2e3047" stroke-width="1.1" stroke-linejoin="round"/>
<circle cx="646.30" cy="546.00" r="1.3" fill="#6e6f8c" stroke="#2e3047" stroke-width="0.7"/>
<circle cx="635.90" cy="562.30" r="1.3" fill="#6e6f8c" stroke="#2e3047" stroke-width="0.7"/>
<text x="651.20" y="565.60" font-size="12.2" text-anchor="middle" fill="#14152a" font-family="Liberation Sans, sans-serif">7</text>
<polygon points="492.10,519.05 507.10,501.80 509.35,503.25 521.15,531.25 505.60,541.55" fill="#8586a2" stroke="#4b4c62" stroke-width="0.6" stroke-linejoin="round"/>
<polygon points="492.10,519.05 507.10,501.80 509.35,503.25 496.15,519.65" fill="#bcbdd2"/>
<polygon points="492.10,519.05 496.15,519.65 507.15,540.45 505.60,541.55" fill="#9c9db8"/>
<polyline points="508.35,502.65 521.15,531.25 505.60,541.55" fill="none" stroke="#34364e" stroke-width="1" stroke-linejoin="round"/>
<polyline points="492.10,519.05 505.60,541.55" fill="none" stroke="#5a5c7a" stroke-width="0.7"/>
<circle cx="513.45" cy="510.65" r="1.5" fill="#b6b7cc" stroke="#34364e" stroke-width="0.7"/>
<circle cx="522.45" cy="527.45" r="1.5" fill="#b6b7cc" stroke="#34364e" stroke-width="0.7"/>
<text x="506.25" y="530.15" font-size="12.2" text-anchor="middle" fill="#14152a" font-family="Liberation Sans, sans-serif">3</text>
<polygon points="649.10,501.80 667.10,519.05 666.65,522.25 653.60,541.55 638.60,530.30 654.85,507.05" fill="#8586a2" stroke="#4b4c62" stroke-width="0.6" stroke-linejoin="round"/>
<polygon points="665.45,518.45 667.10,519.05 666.65,522.25 664.65,524.55 665.05,521.05" fill="#505168"/>
<polyline points="654.85,507.05 638.60,530.30 653.60,541.55" fill="none" stroke="#2e3047" stroke-width="1.1" stroke-linejoin="round"/>
<circle cx="648.45" cy="510.95" r="1.3" fill="#6e6f8c" stroke="#2e3047" stroke-width="0.7"/>
<circle cx="638.05" cy="527.25" r="1.3" fill="#6e6f8c" stroke="#2e3047" stroke-width="0.7"/>
<text x="653.35" y="530.55" font-size="12.2" text-anchor="middle" fill="#14152a" font-family="Liberation Sans, sans-serif">6</text>
<polygon points="494.25,484.00 509.25,466.75 511.50,468.20 523.30,496.20 507.75,506.50" fill="#8586a2" stroke="#4b4c62" stroke-width="0.6" stroke-linejoin="round"/>
<polygon points="494.25,484.00 509.25,466.75 511.50,468.20 498.30,484.60" fill="#bcbdd2"/>
<polygon points="494.25,484.00 498.30,484.60 509.30,505.40 507.75,506.50" fill="#9c9db8"/>
<polyline points="510.50,467.60 523.30,496.20 507.75,506.50" fill="none" stroke="#34364e" stroke-width="1" stroke-linejoin="round"/>
<polyline points="494.25,484.00 507.75,506.50" fill="none" stroke="#5a5c7a" stroke-width="0.7"/>
<circle cx="515.60" cy="475.60" r="1.5" fill="#b6b7cc" stroke="#34364e" stroke-width="0.7"/>
<circle cx="524.60" cy="492.40" r="1.5" fill="#b6b7cc" stroke="#34364e" stroke-width="0.7"/>
<text x="508.40" y="495.10" font-size="12.2" text-anchor="middle" fill="#14152a" font-family="Liberation Sans, sans-serif">4</text>
<polygon points="651.25,466.75 669.25,484.00 668.80,487.20 655.75,506.50 640.75,495.25 657.00,472.00" fill="#8586a2" stroke="#4b4c62" stroke-width="0.6" stroke-linejoin="round"/>
<polygon points="667.60,483.40 669.25,484.00 668.80,487.20 666.80,489.50 667.20,486.00" fill="#505168"/>
<polyline points="657.00,472.00 640.75,495.25 655.75,506.50" fill="none" stroke="#2e3047" stroke-width="1.1" stroke-linejoin="round"/>
<circle cx="650.60" cy="475.90" r="1.3" fill="#6e6f8c" stroke="#2e3047" stroke-width="0.7"/>
<circle cx="640.20" cy="492.20" r="1.3" fill="#6e6f8c" stroke="#2e3047" stroke-width="0.7"/>
<text x="655.50" y="495.50" font-size="12.2" text-anchor="middle" fill="#14152a" font-family="Liberation Sans, sans-serif">5</text>
<g stroke="#222" stroke-width="0.8" fill="none">
<path d="M670.5 494.3 H683.5 V532 H671.5"/>
<path d="M689.5 494.3 H716"/>
<path d="M689 532 H714.5"/>
<circle cx="683.8" cy="512.8" r="6" fill="#fafafa"/>
<ellipse cx="701.3" cy="494.3" rx="5.6" ry="4.6" fill="#fafafa"/>
</g>
<g fill="#222">
<path d="M670 492.3 L674 494.3 L670 496.3 Z"/>
<path d="M689 492.3 L693 494.3 L689 496.3 Z"/>
<path d="M712 492.3 L716 494.3 L712 496.3 Z"/>
<path d="M675 530 L671 532 L675 534 Z"/>
<path d="M692.5 530 L688.5 532 L692.5 534 Z"/>
</g>
<text x="683.8" y="514.7" font-size="5.5" text-anchor="middle" fill="#222" font-family="Liberation Sans, sans-serif">mA</text>
<text x="701.3" y="496.2" font-size="5.2" text-anchor="middle" fill="#222" font-family="Liberation Sans, sans-serif">mA</text>
<path d="M677.5 505 h3 M679 503.5 v3 M677.8 522 h3 M710.5 530 h3 M710 499 h2.5" stroke="#222" stroke-width="0.7" fill="none"/>
</svg>
<!-- TEXT -->
<div class="t" style="left:13.75px;top:7.5px;font-size:10px;line-height:10px;color:#fff;transform:scaleX(0.8035);">PROJECT</div>
<div class="t" style="left:80.00px;top:7.5px;font-size:10px;line-height:10px;color:#e8922a;transform:scaleX(0.7923);z-index:5;">DEVICE</div>
<div class="t" style="left:131.75px;top:7.5px;font-size:10px;line-height:10px;color:#444;transform:scaleX(0.8534);">TOPOLOGY</div>
<div class="t" style="left:200.00px;top:7.5px;font-size:10px;line-height:10px;color:#444;transform:scaleX(0.8606);">VIEW</div>
<div class="t" style="left:24.25px;top:30.5px;font-size:10px;line-height:10px;color:#303030;transform:scaleX(0.9317);">Cut</div>
<div class="t" style="left:24.25px;top:52.0px;font-size:10px;line-height:10px;color:#303030;transform:scaleX(0.9418);">Copy</div>
<div class="t" style="left:24.25px;top:73.5px;font-size:10px;line-height:10px;color:#303030;transform:scaleX(0.8894);">Paste</div>
<div class="t" style="left:76.25px;top:30.5px;font-size:10px;line-height:10px;color:#a6a6a6;transform:scaleX(0.8799);">Add...</div>
<div class="t" style="left:76.25px;top:52.0px;font-size:10px;line-height:10px;color:#303030;transform:scaleX(0.9060);">Remove</div>
<div class="t" style="left:76.25px;top:73.5px;font-size:10px;line-height:10px;color:#303030;transform:scaleX(0.8926);">Rename</div>
<div class="t" style="left:51.25px;top:91.0px;font-size:10px;line-height:10px;color:#303030;transform:scaleX(0.9139);">Edit</div>
<div class="t" style="left:127.50px;top:61.5px;font-size:10px;line-height:10px;color:#a6a6a6;transform:scaleX(0.9396);">Connect</div>
<div class="t" style="left:176.70px;top:61.5px;font-size:10px;line-height:10px;color:#303030;transform:scaleX(0.9461);">Disconnect</div>
<div class="t" style="left:246.00px;top:61.5px;font-size:10px;line-height:10px;color:#303030;transform:scaleX(0.9549);">Load from</div>
<div class="t" style="left:253.50px;top:73.0px;font-size:10px;line-height:10px;color:#303030;transform:scaleX(1.0792);">Device</div>
<div class="t" style="left:303.50px;top:61.5px;font-size:10px;line-height:10px;color:#303030;transform:scaleX(0.9420);">Store to</div>
<div class="t" style="left:306.50px;top:73.0px;font-size:10px;line-height:10px;color:#303030;transform:scaleX(0.8993);">Device</div>
<div class="t" style="left:257.50px;top:91.0px;font-size:10px;line-height:10px;color:#303030;transform:scaleX(0.9421);">Device Operations</div>
<div class="t" style="left:370.00px;top:30.5px;font-size:10px;line-height:10px;color:#a6a6a6;transform:scaleX(0.9481);">Set Offline Parameter</div>
<div class="t" style="left:370.00px;top:52.0px;font-size:10px;line-height:10px;color:#303030;transform:scaleX(0.9462);">Set Online Parameter</div>
<div class="t" style="left:498.50px;top:30.5px;font-size:10px;line-height:10px;color:#a6a6a6;transform:scaleX(0.9750);">Configuration</div>
<div class="t" style="left:498.50px;top:52.0px;font-size:10px;line-height:10px;color:#a6a6a6;transform:scaleX(0.8995);">Observe</div>
<div class="t" style="left:498.50px;top:74.0px;font-size:10px;line-height:10px;color:#a6a6a6;transform:scaleX(0.9115);">Compare</div>
<div class="t" style="left:586.50px;top:30.5px;font-size:10px;line-height:10px;color:#a6a6a6;transform:scaleX(0.9335);">Diagnosis</div>
<div class="t" style="left:586.50px;top:52.0px;font-size:10px;line-height:10px;color:#a6a6a6;transform:scaleX(0.9294);">Channel Functions</div>
<div class="t" style="left:586.50px;top:74.0px;font-size:10px;line-height:10px;color:#303030;transform:scaleX(0.9660);">Additional Functions</div>
<div class="t" style="left:546.50px;top:91.0px;font-size:10px;line-height:10px;color:#303030;transform:scaleX(0.9322);">Device Functions</div>
<div class="t" style="left:711.60px;top:31.0px;font-size:10px;line-height:10px;color:#303030;transform:scaleX(0.9538);">Update Catalogue</div>
<div class="t" style="left:711.60px;top:52.0px;font-size:10px;line-height:10px;color:#303030;transform:scaleX(0.9663);">Filter on Allowed</div>
<div class="t" style="left:711.60px;top:73.5px;font-size:10px;line-height:10px;color:#303030;transform:scaleX(0.9581);">DTM Info</div>
<div class="t" style="left:705.80px;top:91.0px;font-size:10px;line-height:10px;color:#303030;transform:scaleX(0.9273);">Device Catalogue</div>
<div class="t" style="left:6.60px;top:115.5px;font-size:10px;line-height:10px;color:#444;transform:scaleX(0.9581);">Network View</div>
<div class="t" style="left:241.50px;top:115.0px;font-size:10px;line-height:10px;color:#333;transform:scaleX(0.9438);">Device Catalogue</div>
<div class="t" style="left:340.00px;top:115.0px;font-size:10px;line-height:10px;color:#333;transform:scaleX(0.9606);">General Node Info</div>
<div class="t" style="left:442.50px;top:115.0px;font-size:10px;line-height:10px;color:#fff;transform:scaleX(0.9466);z-index:5;">ACT20M-UI-AO - Parameterize Online</div>
<div class="t" style="left:22.50px;top:136.0px;font-size:10px;line-height:10px;color:#444;transform:scaleX(0.9259);">Device Summary</div>
<div class="t" style="left:69.60px;top:171.0px;font-size:10px;line-height:10px;color:#333;transform:scaleX(0.9649);font-weight:bold;">[Unnamed]</div>
<div class="t" style="left:122.50px;top:170.0px;font-size:10px;line-height:10px;color:#333;transform:scaleX(1.0000);">*</div>
<div class="t" style="left:69.60px;top:187.0px;font-size:10px;line-height:10px;color:#444;transform:scaleX(0.9922);">Network</div>
<div class="t" style="left:89.00px;top:207.5px;font-size:10px;line-height:10px;color:#333;transform:scaleX(0.9580);font-weight:bold;">Weidmüller CBX 200</div>
<div class="t" style="left:182.50px;top:206.5px;font-size:10px;line-height:10px;color:#333;transform:scaleX(1.0000);">*</div>
<div class="t" style="left:192.00px;top:207.5px;font-size:10px;line-height:10px;color:#444;transform:scaleX(0.9058);">Wei...</div>
<div class="t" style="left:89.00px;top:221.0px;font-size:10px;line-height:10px;color:#444;transform:scaleX(0.9391);">Weidmüller CBX 200</div>
<div class="t" style="left:96.60px;top:242.5px;font-size:10px;line-height:10px;color:#222;transform:scaleX(0.9962);font-weight:bold;">ACT20M-UI-AO</div>
<div class="t" style="left:168.50px;top:241.5px;font-size:10px;line-height:10px;color:#333;transform:scaleX(1.0000);">*</div>
<div class="t" style="left:178.00px;top:242.5px;font-size:10px;line-height:10px;color:#444;transform:scaleX(0.9419);">Weidm...</div>
<div class="t" style="left:96.60px;top:256.0px;font-size:10px;line-height:10px;color:#333;transform:scaleX(0.9481);">ACT20M-UI-AO</div>
<div class="t" style="left:292.00px;top:135.5px;font-size:10.2px;line-height:10.2px;color:#111;transform:scaleX(0.8589);">ACT20M-UI-AO</div>
<div class="t" style="left:292.00px;top:156.0px;font-size:9.6px;line-height:9.6px;color:#111;transform:scaleX(0.9500);">Universal isolator / converter</div>
<div class="t" style="left:292.00px;top:176.0px;font-size:9.6px;line-height:9.6px;color:#111;transform:scaleX(0.9289);">Order-No. 1176030000</div>
<div class="t" style="left:261.80px;top:218.0px;font-size:9.6px;line-height:9.6px;color:#000;transform:scaleX(0.8583);z-index:3;-webkit-text-stroke:0.2px #000;">Information</div>
<div class="t" style="left:261.80px;top:231.5px;font-size:9.6px;line-height:9.6px;color:#000;transform:scaleX(0.8761);z-index:3;-webkit-text-stroke:0.2px #000;">Identification</div>
<div class="t" style="left:262.10px;top:244.5px;font-size:9.6px;line-height:9.6px;color:#000;transform:scaleX(0.8573);z-index:3;-webkit-text-stroke:0.2px #000;">Parameters (Offline)</div>
<div class="t" style="left:277.10px;top:257.0px;font-size:9.6px;line-height:9.6px;color:#000;transform:scaleX(0.8855);z-index:3;-webkit-text-stroke:0.2px #000;">Input</div>
<div class="t" style="left:276.90px;top:270.0px;font-size:9.6px;line-height:9.6px;color:#000;transform:scaleX(0.8711);z-index:3;-webkit-text-stroke:0.2px #000;">Output</div>
<div class="t" style="left:262.10px;top:283.0px;font-size:9.6px;line-height:9.6px;color:#000;transform:scaleX(0.8498);z-index:3;-webkit-text-stroke:0.2px #000;">Parameters (Online)</div>
<div class="t" style="left:277.10px;top:295.5px;font-size:9.6px;line-height:9.6px;color:#000;transform:scaleX(0.8855);z-index:3;-webkit-text-stroke:0.2px #000;">Input</div>
<div class="t" style="left:276.90px;top:308.5px;font-size:9.6px;line-height:9.6px;color:#000;transform:scaleX(0.8711);z-index:3;-webkit-text-stroke:0.2px #000;">Output</div>
<div class="t" style="left:262.00px;top:321.5px;font-size:9.6px;line-height:9.6px;color:#000;transform:scaleX(0.8548);z-index:3;-webkit-text-stroke:0.2px #000;">Observe</div>
<div class="t" style="left:262.20px;top:334.0px;font-size:9.6px;line-height:9.6px;color:#000;transform:scaleX(0.8670);z-index:3;-webkit-text-stroke:0.2px #000;">Diagnostics</div>
<div class="t" style="left:261.90px;top:347.0px;font-size:9.6px;line-height:9.6px;color:#000;transform:scaleX(0.8749);z-index:3;-webkit-text-stroke:0.2px #000;">Additional Functions</div>
<div class="t" style="left:277.20px;top:359.5px;font-size:9.6px;line-height:9.6px;color:#000;transform:scaleX(0.8683);z-index:3;-webkit-text-stroke:0.2px #000;">Factory settings</div>
<div class="t" style="left:429.80px;top:228.0px;font-size:9.6px;line-height:9.6px;color:#111;transform:scaleX(0.8910);z-index:3;">Output type</div>
<div class="t" style="left:477.40px;top:249.0px;font-size:9.6px;line-height:9.6px;color:#111;transform:scaleX(0.8500);z-index:3;">Current</div>
<div class="t" style="left:429.80px;top:279.0px;font-size:9.6px;line-height:9.6px;color:#111;transform:scaleX(0.8954);z-index:3;">Output Range</div>
<div class="t" style="left:479.20px;top:307.5px;font-size:10.4px;line-height:10.4px;color:#111;transform:scaleX(0.8127);z-index:6;">4 - 20</div>
<div class="t" style="left:565.60px;top:306.5px;font-size:9.6px;line-height:9.6px;color:#111;transform:scaleX(0.8716);z-index:3;">[mA]</div>
<div class="t" style="left:479.00px;top:321.5px;font-size:10.6px;line-height:10.6px;color:#111;transform:scaleX(0.7935);z-index:9;">0 - 20</div>
<div class="t" style="left:479.00px;top:332.0px;font-size:10.6px;line-height:10.6px;color:#fff;transform:scaleX(0.7935);z-index:9;">4 - 20</div>
<div class="t" style="left:479.00px;top:342.0px;font-size:10.6px;line-height:10.6px;color:#111;transform:scaleX(0.7935);z-index:9;">20 - 0</div>
<div class="t" style="left:479.00px;top:353.0px;font-size:10.6px;line-height:10.6px;color:#111;transform:scaleX(0.7935);z-index:9;">20 - 4</div>
<div class="t" style="left:430.00px;top:387.0px;font-size:9.6px;line-height:9.6px;color:#111;transform:scaleX(0.8978);z-index:3;">Error Action</div>
<div class="t" style="left:469.40px;top:409.0px;font-size:9.6px;line-height:9.6px;color:#111;transform:scaleX(0.8663);z-index:3;">Upscale (23 mA)</div>
<div class="t" style="left:430.00px;top:446.5px;font-size:9.6px;line-height:9.6px;color:#111;transform:scaleX(0.9043);z-index:3;">Terminal connections</div>
<div class="t" style="left:245.00px;top:766.0px;font-size:10px;line-height:10px;color:#222;transform:scaleX(0.9447);">Connected</div>
<div class="t" style="left:345.50px;top:766.0px;font-size:10px;line-height:10px;color:#222;transform:scaleX(0.8993);">Device</div>
</body>
</html>
